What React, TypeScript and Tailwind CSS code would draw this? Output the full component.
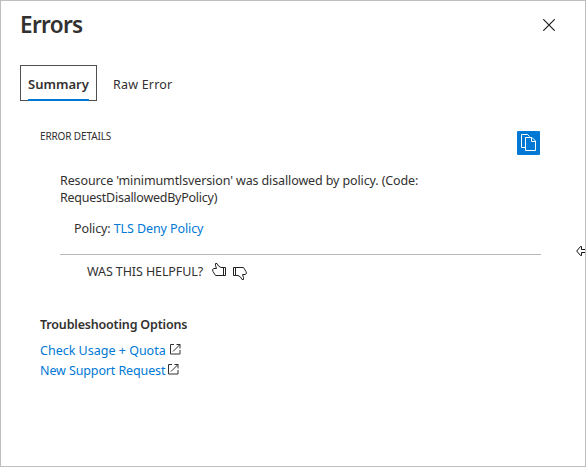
import type { ReactNode } from 'react';

function CloseIcon() {
  return (
    <svg width="12" height="12" viewBox="0 0 12 12" fill="none" stroke="#1b1a19" strokeWidth="1.15">
      <path d="M.3.3l11.4 11.4M11.7.3L.3 11.7" />
    </svg>
  );
}

function CopyIcon() {
  return (
    <svg width="23" height="24" viewBox="0 0 23 24" fill="none" stroke="#fff">
      <path d="M8 16.500H4.500v-13h6l2 2" />
      <path d="M8.500 6.500h6.500l3.500 3.500v9.500h-10z" fill="#0078d4" />
      <path d="M14.500 6.500v4h4" />
    </svg>
  );
}

function ThumbUp({ className = '' }: { className?: string }) {
  return (
    <svg className={className} width="14" height="13" viewBox="0 0 14 13" fill="none" stroke="#222" strokeWidth="1">
      <path d="M.5 6.500L2 5.500h2.500L3.500 2.500V.5H5l1.500 2.500L9 4.500h4.500v8H3.500L1 8.500zM11.500 4.500v8" />
    </svg>
  );
}

function ExternalIcon() {
  return (
    <svg className="mt-[2px]" width="11" height="11" viewBox="0 0 11 11" fill="none" stroke="#323130">
      <path d="M4 .5H.5v9.500h9.500V6M6.500.5H10v4M10 .5L3 7.500" />
    </svg>
  );
}

function TextLink({ children, className }: { children: ReactNode; className: string }) {
  return <a href="#" className={`text-[#0078d4] ${className}`}>{children}</a>;
}

export default function App() {
  return (
    <div className="relative h-[467px] w-[586px] overflow-hidden border border-[#bebebe] bg-white pl-[19px] pr-[44px] font-['Noto_Sans','Open_Sans',sans-serif] text-[12.5px] leading-[17px] whitespace-nowrap text-[#323130]">
      <header className="flex h-[64px] justify-between">
        <h1 className="pt-[8px] text-[22.5px] leading-[32px] font-semibold tracking-[-0.65px]">Errors</h1>
        <button aria-label="Close" className="mt-[18px] -mr-[14px] h-3 w-3"><CloseIcon /></button>
      </header>
      <nav className="flex h-[36px]">
        <button className="h-[36px] w-[77px] border border-[#505050] px-[7px]">
          <span className="flex h-[35px] items-end border-b-2 border-[#0078d4] pb-[5px] text-[13px] font-semibold">
            <span className="block h-[18px]">Summary</span>
          </span>
        </button>
        <button className="ml-[16px] pt-[2px] tracking-[0.2px]">Raw Error</button>
      </nav>
      <main className="pl-[20px]">
        <div className="flex h-[71px] justify-between">
          <h2 className="pt-[27px] text-[10px] tracking-[-0.13px]">ERROR DETAILS</h2>
          <button aria-label="Copy" className="mt-[30px] mr-[1px] h-[24px] w-[23px] rounded-[1px] bg-[#0078d4]"><CopyIcon /></button>
        </div>
        <section className="ml-[20px] h-[83px] border-b border-[#b8b8b8]">
          <p className="tracking-[-0.12px]">Resource 'minimumtlsversion' was disallowed by policy. (Code:</p>
          <p className="tracking-[-0.25px]">RequestDisallowedByPolicy)</p>
          <p className="mt-[14px] ml-[14px] tracking-[-0.1px]">Policy: <TextLink className="">TLS Deny Policy</TextLink></p>
        </section>
        <div className="flex h-[61px] pt-[8px] pl-[47px]">
          <span className="w-[125px] tracking-[-0.1px]">WAS THIS HELPFUL?</span>
          <ThumbUp />
          <ThumbUp className="mt-[4px] ml-[7px] rotate-180" />
        </div>
        <h2 className="font-semibold tracking-[-0.18px]">Troubleshooting Options</h2>
        <div className="mt-[9px] flex h-[20px] gap-[4px]"><TextLink className="">Check Usage + Quota</TextLink><ExternalIcon /></div>
        <div className="flex h-[20px] gap-[3px]"><TextLink className="tracking-[-0.12px]">New Support Request</TextLink><ExternalIcon /></div>
      </main>
      <svg className="absolute top-[245px] right-[-1px]" width="10" height="10" viewBox="0 0 10 10" fill="#fff" stroke="#111">
        <path d="M10 3.500H5.500v-3h-1L.7 5l3.800 4.500h1v-3H10" />
      </svg>
    </div>
  );
}
